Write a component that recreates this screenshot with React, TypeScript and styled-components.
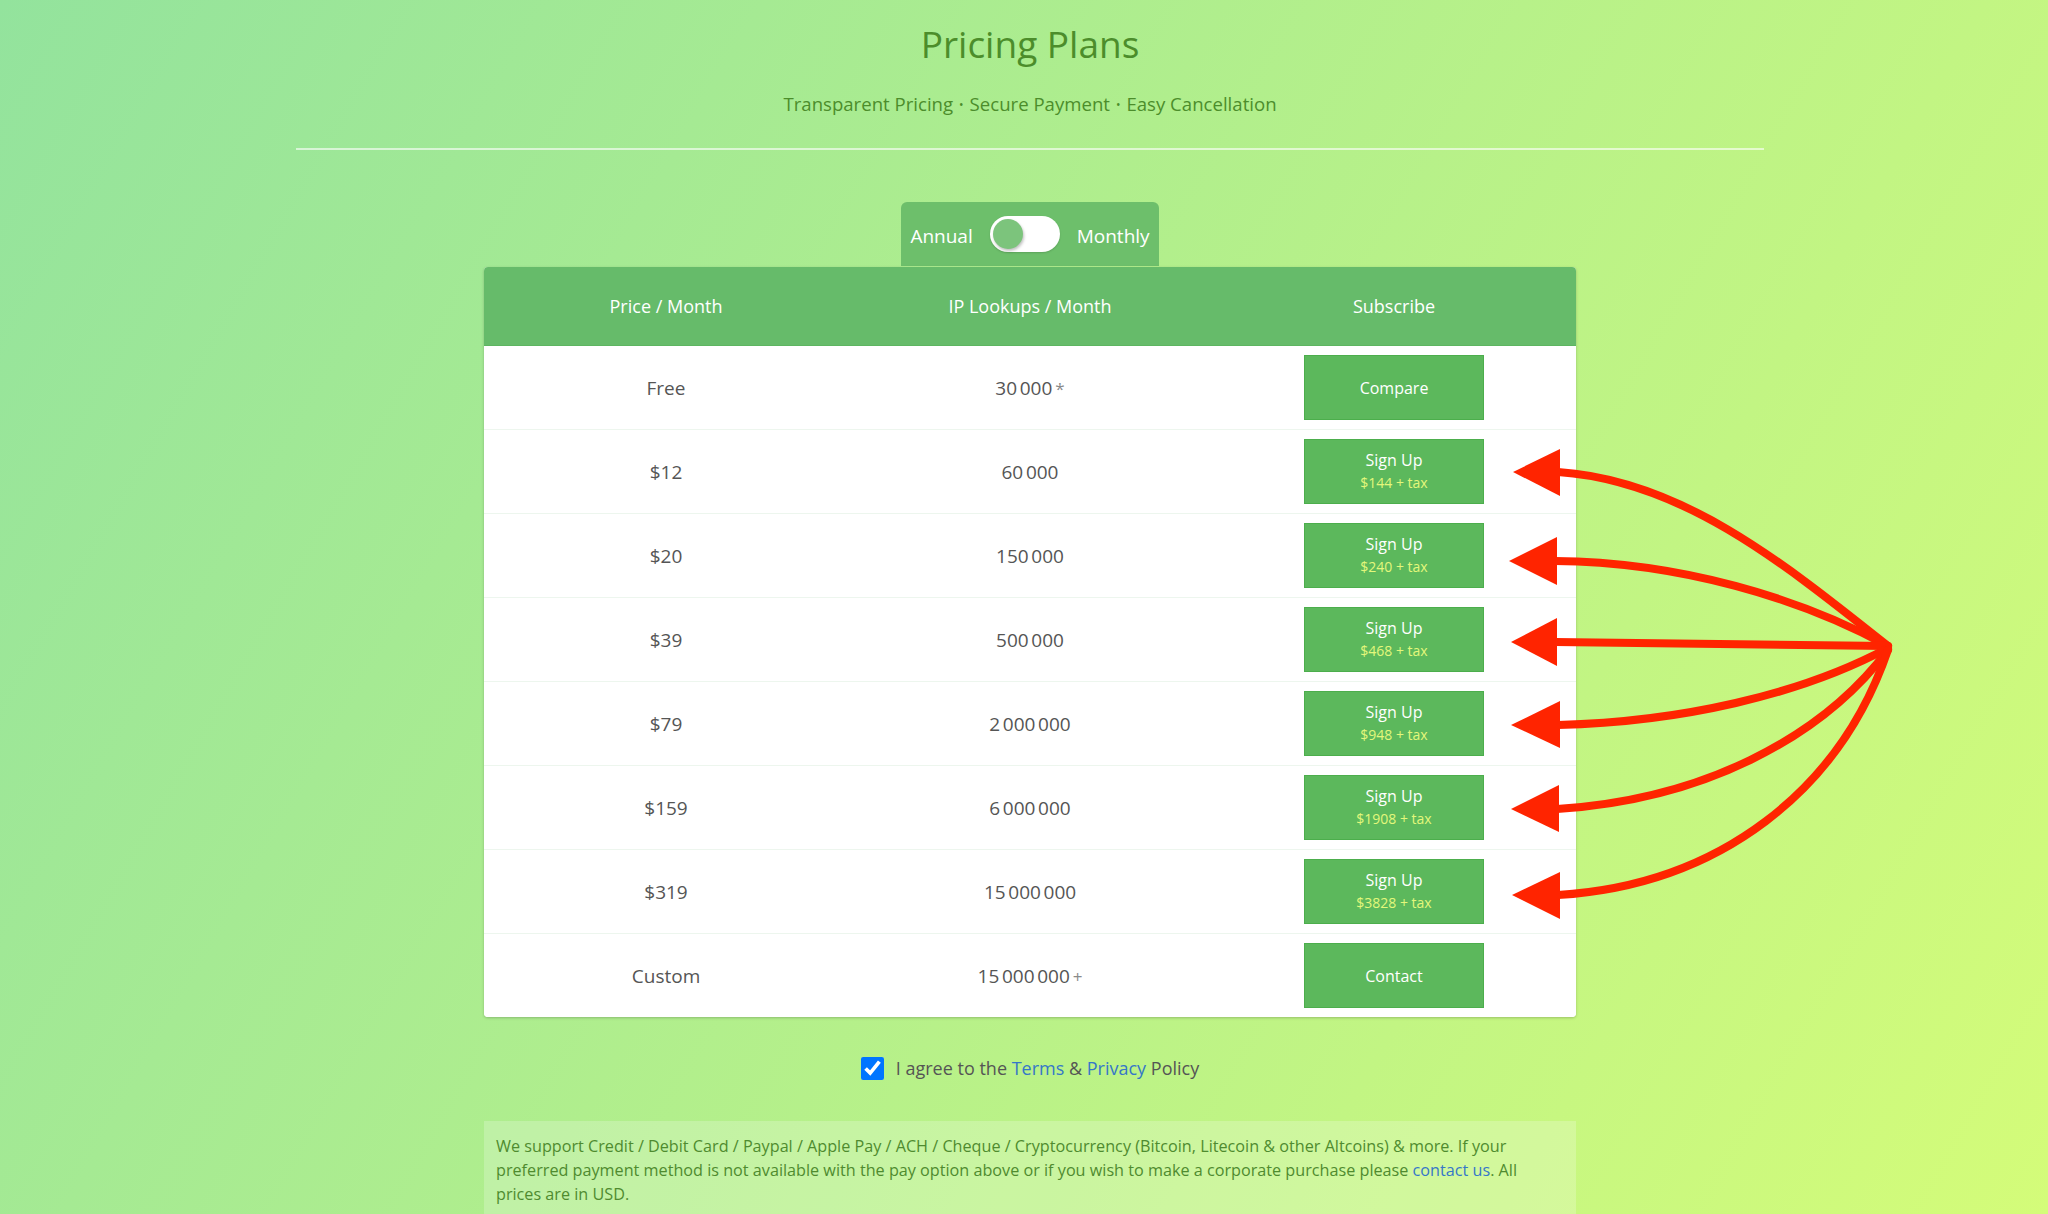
import React from "react";
import styled, { createGlobalStyle } from "styled-components";

const GlobalStyle = createGlobalStyle`
  html, body {
    margin: 0;
    padding: 0;
  }
  body {
    font-family: "Open Sans", "Liberation Sans", sans-serif;
  }
`;

type Plan = {
  price: string;
  lookups: number;
  suffix?: string;
  action: string;
  yearly?: string;
};

const plans: Plan[] = [
  { price: "Free", lookups: 30000, suffix: "*", action: "Compare" },
  { price: "$12", lookups: 60000, action: "Sign Up", yearly: "$144" },
  { price: "$20", lookups: 150000, action: "Sign Up", yearly: "$240" },
  { price: "$39", lookups: 500000, action: "Sign Up", yearly: "$468" },
  { price: "$79", lookups: 2000000, action: "Sign Up", yearly: "$948" },
  { price: "$159", lookups: 6000000, action: "Sign Up", yearly: "$1908" },
  { price: "$319", lookups: 15000000, action: "Sign Up", yearly: "$3828" },
  { price: "Custom", lookups: 15000000, suffix: "+", action: "Contact" },
];

// arrows drawn on top of the screenshot, pointing at the paid plans
const arrows = [
  { d: "M1558,472 C1680,480 1780,560 1888,646", head: "1513,472 1560,449 1560,496" },
  { d: "M1555,561 C1680,562 1800,598 1888,646", head: "1509,561 1557,537 1557,585" },
  { d: "M1555,642 L1888,646", head: "1511,642 1557,618 1557,666" },
  { d: "M1558,725 C1680,722 1800,695 1888,648", head: "1511,725 1560,701 1560,748" },
  { d: "M1557,809 C1700,800 1820,740 1888,650", head: "1511,809 1559,785 1559,832" },
  { d: "M1558,895 C1720,885 1840,790 1888,650", head: "1512,895 1560,872 1560,919" },
];

const Page = styled.div`
  position: relative;
  min-height: 100vh;
  box-sizing: border-box;
  padding: 21px 0 0 12px;
  display: flex;
  flex-direction: column;
  align-items: center;
  background: linear-gradient(120deg, #93e39d 0%, #d4fc79 100%);
  overflow: hidden;
`;

const Title = styled.h1`
  margin: 0;
  font-size: 37px;
  line-height: 46px;
  font-weight: 400;
  color: #4c8d2b;
`;

const Subtitle = styled.p`
  margin: 24px 0 0;
  font-size: 18.6px;
  line-height: 26px;
  color: #4c8d2b;
`;

const Dot = styled.span`
  margin: 0 6px;
  font-size: 12px;
  vertical-align: 2px;
`;

const Divider = styled.hr`
  width: 1468px;
  margin: 30px 0 0;
  border: 0;
  border-top: 2px solid rgba(255, 255, 255, 0.6);
`;

const ToggleTab = styled.div`
  margin-top: 52px;
  width: 258px;
  height: 64px;
  box-sizing: border-box;
  padding-top: 3px;
  border-radius: 6px 6px 0 0;
  background: #6dbf6b;
  display: flex;
  align-items: center;
  justify-content: center;
  gap: 17px;
  color: #fff;
  font-size: 19px;
`;

const Switch = styled.div`
  position: relative;
  width: 70px;
  height: 36px;
  margin-top: -3px;
  border-radius: 18px;
  background: #fff;
  box-shadow: 0 1px 2px rgba(0, 0, 0, 0.15);
`;

const Knob = styled.span`
  position: absolute;
  left: 3px;
  top: 3px;
  width: 30px;
  height: 30px;
  border-radius: 50%;
  background: #7cc47c;
  box-shadow: 1px 2px 3px rgba(0, 0, 0, 0.25);
`;

const Table = styled.div`
  margin-top: 1px;
  width: 1092px;
  background: #fff;
  border-radius: 4px;
  overflow: hidden;
  box-shadow: 0 1px 3px rgba(0, 0, 0, 0.22);
`;

const Row = styled.div<{ $head?: boolean }>`
  display: grid;
  grid-template-columns: repeat(3, 1fr);
  align-items: center;
  justify-items: center;
  box-sizing: border-box;
  height: ${(p) => (p.$head ? "79px" : "84px")};
  background: ${(p) => (p.$head ? "#66bb6a" : "#fff")};
  color: ${(p) => (p.$head ? "#fff" : "#555")};
  font-size: ${(p) => (p.$head ? "18px" : "19px")};
  border-bottom: 1px solid ${(p) => (p.$head ? "#5db561" : "#edf6ee")};

  &:last-child {
    border-bottom: 0;
    height: 83px;
  }
`;

const Group = styled.span`
  & + & {
    margin-left: 0.14em;
  }
`;

const Suffix = styled.span`
  margin-left: 3px;
  color: #8a8a8a;
  font-size: 17px;
`;

const ActionButton = styled.button`
  width: 180px;
  height: 65px;
  box-sizing: border-box;
  border: 1px solid #4cae4c;
  background: #5cb85c;
  color: #fff;
  font-family: inherit;
  font-size: 16px;
  line-height: 22px;
  display: flex;
  flex-direction: column;
  align-items: center;
  justify-content: center;
  cursor: pointer;
`;

const Yearly = styled.span`
  color: #e3f77b;
  font-size: 14px;
  line-height: 23px;
`;

const Agree = styled.label`
  margin-top: 38px;
  display: flex;
  align-items: center;
  gap: 12px;
  font-size: 18px;
  line-height: 26px;
  color: #555;
`;

const Check = styled.input`
  width: 23px;
  height: 23px;
  margin: 0;
`;

const Link = styled.a`
  color: #3577c8;
  text-decoration: none;
`;

const Note = styled.div`
  margin-top: 40px;
  width: 1092px;
  box-sizing: border-box;
  padding: 13px 12px 14px;
  background: rgba(255, 255, 255, 0.22);
  color: #4f8b2f;
  font-size: 16.2px;
  line-height: 24px;
`;

const Overlay = styled.svg`
  position: absolute;
  left: 0;
  top: 0;
  pointer-events: none;
`;

function Lookups({ value }: { value: number }) {
  const groups = value.toLocaleString("en-US").split(",");
  return (
    <span>
      {groups.map((g, i) => (
        <Group key={i}>{g}</Group>
      ))}
    </span>
  );
}

export default function App() {
  return (
    <Page>
      <GlobalStyle />
      <Title>Pricing Plans</Title>
      <Subtitle>
        Transparent Pricing<Dot>•</Dot>Secure Payment<Dot>•</Dot>Easy Cancellation
      </Subtitle>
      <Divider />

      <ToggleTab>
        <span>Annual</span>
        <Switch>
          <Knob />
        </Switch>
        <span>Monthly</span>
      </ToggleTab>

      <Table>
        <Row $head>
          <span>Price / Month</span>
          <span>IP Lookups / Month</span>
          <span>Subscribe</span>
        </Row>
        {plans.map((plan) => (
          <Row key={plan.price}>
            <span>{plan.price}</span>
            <span>
              <Lookups value={plan.lookups} />
              {plan.suffix && <Suffix>{plan.suffix}</Suffix>}
            </span>
            <ActionButton>
              <span>{plan.action}</span>
              {plan.yearly && <Yearly>{plan.yearly} + tax</Yearly>}
            </ActionButton>
          </Row>
        ))}
      </Table>

      <Agree>
        <Check type="checkbox" defaultChecked />
        <span>
          I agree to the <Link href="#">Terms</Link> &amp; <Link href="#">Privacy</Link> Policy
        </span>
      </Agree>

      <Note>
        We support Credit / Debit Card / Paypal / Apple Pay / ACH / Cheque / Cryptocurrency (Bitcoin,
        Litecoin &amp; other Altcoins) &amp; more. If your preferred payment method is not available
        with the pay option above or if you wish to make a corporate purchase please{" "}
        <Link href="#">contact us</Link>. All prices are in USD.
      </Note>

      <Overlay width="2048" height="1214" viewBox="0 0 2048 1214">
        {arrows.map((a, i) => (
          <g key={i}>
            <path d={a.d} fill="none" stroke="#ff2400" strokeWidth="8" strokeLinecap="round" />
            <polygon points={a.head} fill="#ff2400" />
          </g>
        ))}
      </Overlay>
    </Page>
  );
}
